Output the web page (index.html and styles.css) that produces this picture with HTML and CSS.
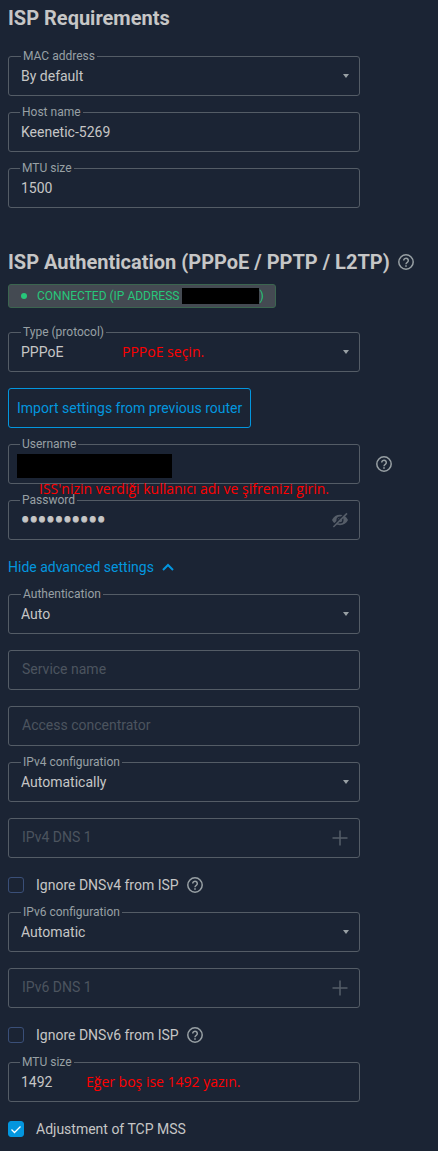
FILE: index.html
```html
<!DOCTYPE html>
<html lang="en">
<head>
<meta charset="utf-8">
<meta name="viewport" content="width=device-width, initial-scale=1">
<title>ISP settings</title>
<link rel="stylesheet" href="styles.css">
</head>
<body>
<svg class="sprite" aria-hidden="true">
  <symbol id="help" viewBox="0 0 16 16">
    <circle cx="8" cy="8" r="7.2" fill="none" stroke="currentColor" stroke-width="1.5"/>
    <path d="M5.7 6.5a2.3 2.3 0 1 1 3.6 1.9C8.4 9 8 9.300 8 10.200" fill="none" stroke="currentColor" stroke-width="1.500"/>
    <path d="M7.200 11.200h1.600v1.600H7.200z" fill="currentColor"/>
  </symbol>
  <symbol id="plus" viewBox="0 0 16 16">
    <path d="M8 .5v15M.5 8h15" fill="none" stroke="currentColor" stroke-width="1.500"/>
  </symbol>
</svg>
<main class="page">
  <section class="section">
    <h2 class="title">ISP Requirements</h2>
    <div class="stack">
      <div class="field">
        <select class="control" id="mac"><option>By default</option></select>
        <label class="label" for="mac">MAC address</label>
      </div>
      <div class="field">
        <input class="control" id="host" type="text" value="Keenetic-5269">
        <label class="label" for="host">Host name</label>
      </div>
      <div class="field">
        <input class="control" id="mtu" type="text" value="1500">
        <label class="label" for="mtu">MTU size</label>
      </div>
    </div>
  </section>

  <section class="section">
    <h2 class="title title-auth">ISP Authentication (PPPoE / PPTP / L2TP)
      <svg class="icon" role="img" aria-label="Help"><use href="#help"/></svg>
    </h2>
    <p class="status"><span class="dot"></span><span class="status-text">CONNECTED (IP ADDRESS <span class="mask mask-ip"></span>)</span></p>
    <div class="stack">
      <div class="field">
        <select class="control" id="type"><option>PPPoE</option></select>
        <label class="label" for="type">Type (protocol)</label>
        <span class="note note-type">PPPoE seçin.</span>
      </div>
      <button class="import" type="button">Import settings from previous router</button>
      <div class="field-row">
        <div class="field">
          <input class="control" id="user" type="text">
          <label class="label" for="user">Username</label>
          <span class="mask mask-user"></span>
          <span class="note note-user">ISS'nizin verdiği kullanıcı adı ve şifrenizi girin.</span>
        </div>
        <svg class="icon" role="img" aria-label="Help"><use href="#help"/></svg>
      </div>
      <div class="field">
        <input class="control control-password" id="pass" type="password" value="abcdefghij">
        <label class="label" for="pass">Password</label>
        <button class="action" type="button" aria-label="Show password">
          <svg class="icon" viewBox="0 0 16 16">
            <path d="M0 8C1.600 4.700 4.500 2.800 8 2.800S14.400 4.700 16 8c-1.600 3.300-4.500 5.200-8 5.200S1.600 11.300 0 8z" fill="currentColor"/>
            <circle cx="8" cy="8" r="2.900" fill="none" stroke="#1b2434" stroke-width="1.300"/>
            <path d="M.8 13.800L14 .6" stroke="#1b2434" stroke-width="1.500"/>
            <path d="M1.400 15L15 1.400" stroke="currentColor" stroke-width="1.600"/>
          </svg>
        </button>
      </div>
      <button class="toggle" type="button">Hide advanced settings
        <svg class="chevron" viewBox="0 0 12 8"><path d="M1 7l5-5 5 5" fill="none" stroke="currentColor" stroke-width="2"/></svg>
      </button>
      <div class="field">
        <select class="control" id="auth"><option>Auto</option></select>
        <label class="label" for="auth">Authentication</label>
      </div>
      <div class="field">
        <input class="control" type="text" placeholder="Service name" aria-label="Service name">
      </div>
      <div class="field">
        <input class="control" type="text" placeholder="Access concentrator" aria-label="Access concentrator">
      </div>
      <div class="field">
        <select class="control" id="v4"><option>Automatically</option></select>
        <label class="label" for="v4">IPv4 configuration</label>
      </div>
      <div class="field">
        <input class="control" type="text" placeholder="IPv4 DNS 1" aria-label="IPv4 DNS 1">
        <button class="action" type="button" aria-label="Add IPv4 DNS"><svg class="icon"><use href="#plus"/></svg></button>
      </div>
      <div class="check-row">
        <label class="check"><input class="box" type="checkbox">Ignore DNSv4 from ISP</label>
        <svg class="icon" role="img" aria-label="Help"><use href="#help"/></svg>
      </div>
      <div class="field">
        <select class="control" id="v6"><option>Automatic</option></select>
        <label class="label" for="v6">IPv6 configuration</label>
      </div>
      <div class="field">
        <input class="control" type="text" placeholder="IPv6 DNS 1" aria-label="IPv6 DNS 1">
        <button class="action" type="button" aria-label="Add IPv6 DNS"><svg class="icon"><use href="#plus"/></svg></button>
      </div>
      <div class="check-row">
        <label class="check"><input class="box" type="checkbox">Ignore DNSv6 from ISP</label>
        <svg class="icon" role="img" aria-label="Help"><use href="#help"/></svg>
      </div>
      <div class="field">
        <input class="control" id="mtu2" type="text" value="1492">
        <label class="label" for="mtu2">MTU size</label>
        <span class="note note-mtu">Eğer boş ise 1492 yazın.</span>
      </div>
      <div class="check-row">
        <label class="check"><input class="box" type="checkbox" checked>Adjustment of TCP MSS</label>
      </div>
    </div>
  </section>
</main>
</body>
</html>
```
FILE: styles.css
```css
* { box-sizing: border-box; }

body {
  margin: 0;
  background: #1b2434;
  color: #c6c6c6;
  font: 14px/22px Roboto, sans-serif;
}

.sprite { position: absolute; width: 0; height: 0; }

.page {
  display: flex;
  flex-direction: column;
  gap: 40px;
  padding: 4px 8px 11px;
}

.title {
  margin: 0 0 24px;
  font-size: 20px;
  line-height: 28px;
  font-weight: 700;
}

.title-auth {
  display: flex;
  align-items: center;
  gap: 8px;
  margin-bottom: 8px;
  white-space: nowrap;
}

.icon {
  display: block;
  flex: none;
  width: 16px;
  height: 16px;
  color: #98a0a4;
}

.stack {
  display: flex;
  flex-direction: column;
  align-items: flex-start;
  gap: 16px;
}

.status {
  display: flex;
  align-items: center;
  gap: 10px;
  width: fit-content;
  height: 24px;
  margin: 0 0 24px;
  padding: 0 11px 0 12px;
  border: 1px solid #3b654f;
  border-radius: 3px;
  background: #444a52;
  color: #27c77a;
  font-size: 12px;
}

.status-text { display: flex; align-items: center; white-space: pre; }

.dot {
  width: 6px;
  height: 6px;
  border-radius: 50%;
  background: currentColor;
}

.mask { background: #000; }
.mask-ip { width: 77px; height: 16px; }

.mask-user {
  position: absolute;
  left: 9px;
  top: 10px;
  width: 155px;
  height: 24px;
}

.field {
  position: relative;
  width: 100%;
  max-width: 352px;
}

.field-row {
  display: flex;
  align-items: center;
  gap: 16px;
  width: 100%;
}

.control {
  display: block;
  width: 100%;
  height: 40px;
  padding: 0 12px;
  border: 1px solid #545c66;
  border-radius: 3px;
  outline: 0;
  appearance: none;
  background: transparent;
  color: inherit;
  font: inherit;
}

.control::placeholder { color: #4c545f; opacity: 1; }
.control:placeholder-shown { padding: 0 13px 2px; }

.control-password {
  font-size: 25px;
  -webkit-text-stroke: 1px currentColor;
}

select.control {
  background: url("data:image/svg+xml,%3Csvg xmlns='http://www.w3.org/2000/svg' viewBox='0 0 6 4'%3E%3Cpath d='M0 0h6L3 4z' fill='%2398a0a4'/%3E%3C/svg%3E") right 10px top 17px / 6px 4px no-repeat;
}

.label {
  position: absolute;
  left: 12px;
  top: -8px;
  padding: 0 2px;
  background: #1b2434;
  color: #98a0a4;
  font-size: 12px;
  line-height: 16px;
}

select + .label { left: 13px; }

.note {
  position: absolute;
  color: #f00;
  font-family: "Open Sans", sans-serif;
  font-size: 14px;
  white-space: nowrap;
}

.note-type { left: 114px; top: 9px; }
.note-user { left: 31px; top: 34px; z-index: 1; }
.note-mtu { left: 78px; top: 9px; }

.import {
  height: 40px;
  padding: 0 8px;
  border: 1px solid #0396df;
  border-radius: 3px;
  background: transparent;
  color: #0396df;
  font: inherit;
}

.action {
  position: absolute;
  right: 12px;
  top: 12px;
  padding: 0;
  border: 0;
  background: none;
}

.action .icon { color: #555d68; }

.toggle {
  display: flex;
  align-items: center;
  gap: 8px;
  padding: 0;
  border: 0;
  background: none;
  color: #0396df;
  font: inherit;
}

.chevron { width: 12px; height: 8px; }

.check-row, .check { display: flex; align-items: center; }
.check-row { gap: 8px; }
.check { gap: 12px; }

.box {
  width: 16px;
  height: 16px;
  margin: 0;
  border: 1px solid #3a4f78;
  border-radius: 3px;
  appearance: none;
}

.box:checked {
  border-color: #0396df;
  background: #0396df url("data:image/svg+xml,%3Csvg xmlns='http://www.w3.org/2000/svg' viewBox='0 0 14 14'%3E%3Cpath d='M2.500 7.500l3 3 6-6' fill='none' stroke='white' stroke-width='1.300'/%3E%3C/svg%3E") center / 14px no-repeat;
}
```
